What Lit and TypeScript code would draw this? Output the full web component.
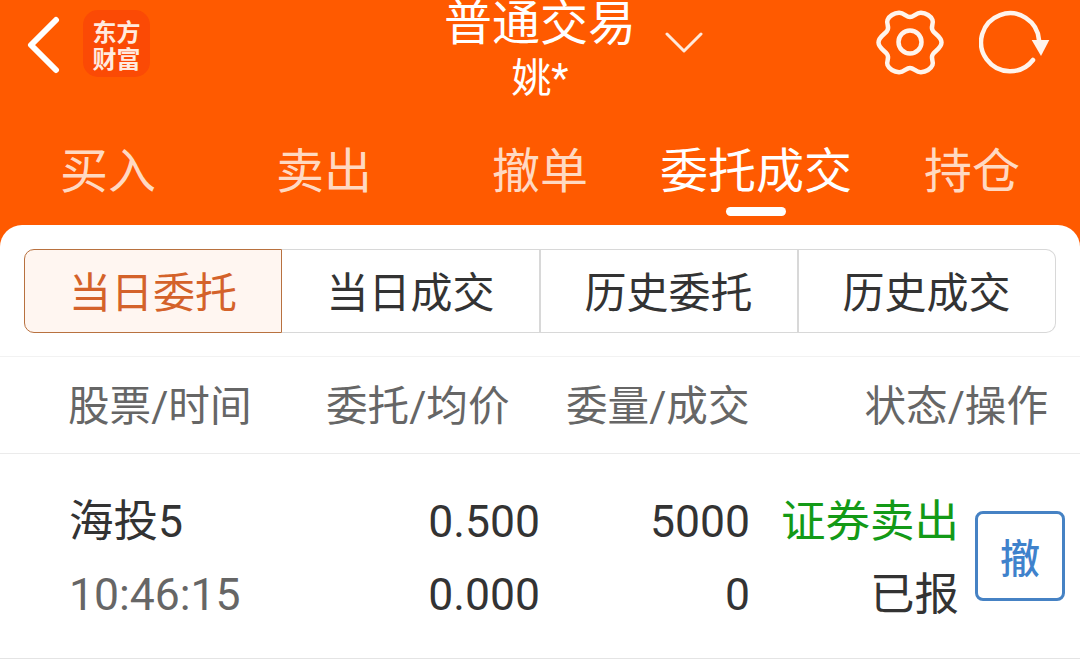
import { LitElement, html, css } from "lit";
import { customElement } from "lit/decorators.js";

@customElement("app-root")
export class AppRoot extends LitElement {
  static styles = css`
    :host { display: block; width: 1080px; height: 665px; overflow: hidden; background: #ff5a00;
      font-family: Roboto, "Noto Sans CJK SC", sans-serif; color: #333; }
    .head { height: 225px; display: flex; flex-direction: column; }
    .top { height: 118px; position: relative; display: flex; color: #fff; overflow: visible; }
    .left { display: flex; align-items: flex-start; gap: 23px; padding: 16px 0 0 26px; width: 300px; box-sizing: border-box; }
    .logo { width: 67px; height: 67px; margin-top: -6px; border-radius: 15px; background: #fb4a05; color: #ffeadf;
      font: 700 24px/27px "Noto Sans CJK SC", sans-serif; display: flex; flex-direction: column; align-items: center; justify-content: center; }
    .logo span { display: block; height: 27px; line-height: 27px; }
    .title { flex: 1; display: flex; flex-direction: column; align-items: center; }
    .t1 { font-size: 48px; line-height: 48px; height: 48px; }
    .t2 { font-size: 40px; line-height: 52px; margin-top: 5px; }
    .chev { position: absolute; left: 665px; top: 31px; }
    .right { width: 300px; display: flex; justify-content: flex-end; gap: 35px; padding: 10px 29px 0 0; box-sizing: border-box; align-items: flex-start; }
    .tabs { display: flex; height: 107px; }
    .tab { width: 216px; text-align: center; font-size: 48px; line-height: 60px; padding-top: 24px; color: #ffd9c2; position: relative; box-sizing: border-box; white-space: nowrap; }
    .tab.on { color: #fff; }
    .tab.on::after { content: ""; position: absolute; left: 78px; top: 89px; width: 60px; height: 9px; border-radius: 5px; background: #fff; }
    .panel { background: #fff; border-radius: 22px 22px 0 0; height: 440px; }
    .seg { margin: 0 24px; padding-top: 24px; display: grid; grid-template-columns: repeat(4, 258px); height: 84px; }
    .seg div { border: 1px solid #d8d8d8; border-left: 0; border-right-width: 2px; margin-right: -1px; font-size: 42px; padding-bottom: 3px; display: flex; align-items: center; justify-content: center; color: #333; box-sizing: border-box; height: 84px; }
    .seg div:last-child { border-radius: 0 10px 10px 0; border-right-width: 1px; margin-right: 0; }
    .seg .on { border: 1px solid #b8713f; margin-right: 0; border-radius: 10px 0 0 10px; background: #fff6f1; color: #d4622a; }
    .cols { margin-top: 23px; height: 98px; border-top: 1px solid #f2f2f2; border-bottom: 1px solid #ebebeb; box-sizing: border-box; display: grid;
      grid-template-columns: 68px 258px 184px 56px 184px 1fr 32px; align-items: center; font-size: 41.6px; color: #666; white-space: nowrap; }
    .cols span { margin-top: -4px; }
    .cols .c1 { grid-column: 2; } .cols .c2 { grid-column: 3; } .cols .c3 { grid-column: 5; } .cols .c4 { grid-column: 6; text-align: right; }
    .row { height: 205px; border-bottom: 1px solid #e4e4e4; box-sizing: border-box; display: flex; font-size: 44.5px; }
    .col { display: flex; flex-direction: column; padding-top: 42px; line-height: 52px; gap: 21px; white-space: nowrap; }
    .name { width: 330px; padding-left: 69px; box-sizing: border-box; }
    .time { color: #666; }
    .num { text-align: right; }
    .price { width: 210px; }
    .qty { width: 210px; }
    .stat { width: 209px; text-align: right; }
    .sell { color: #139a17; }
    .btn { width: 90px; height: 90px; margin: 57px 0 0 16px; border: 3px solid #4682c4; border-radius: 8px; box-sizing: border-box; color: #3f82cc;
      font-size: 40px; font-weight: 500; display: flex; align-items: center; justify-content: center; }
  `;
  render() {
    return html`
      <div class="head">
        <div class="top">
          <div class="left">
            <svg width="34" height="58" viewBox="0 0 34 58"><path d="M30 4 L5 29 L30 54" fill="none" stroke="#fff" stroke-width="6" stroke-linecap="round" stroke-linejoin="round"/></svg>
            <div class="logo"><span>东方</span><span>财富</span></div>
          </div>
          <div class="title"><div class="t1">普通交易</div><div class="t2">姚*</div></div>
          <svg class="chev" width="38" height="24" viewBox="0 0 38 24"><path d="M2 3 L19 20 L36 3" fill="none" stroke="#ffe9dc" stroke-width="3" stroke-linecap="round" stroke-linejoin="round"/></svg>
          <div class="right">
            <svg width="68" height="66" viewBox="0 0 68 66"><path d="M34 7 C38 7 40 2.5 45 2.8 C50 3 55 6 56.5 10 C58 14 54 17 57 21 C59 24 65.5 27 65.5 32.5 C65.5 38 59 41 57 44 C54 48 58 51 56.5 55 C55 59 50 62 45 62.2 C40 62.5 38 58 34 58 C30 58 28 62.5 23 62.2 C18 62 13 59 11.5 55 C10 51 14 48 11 44 C9 41 2.5 38 2.5 32.5 C2.5 27 9 24 11 21 C14 17 10 14 11.5 10 C13 6 18 3 23 2.8 C28 2.5 30 7 34 7 Z" fill="none" stroke="#fff4ec" stroke-width="4.5" stroke-linejoin="round"/><circle cx="34" cy="32" r="11.5" fill="none" stroke="#fff4ec" stroke-width="4.5"/></svg>
            <svg width="72" height="66" viewBox="0 0 72 66"><path d="M54 50 A29 29 0 1 1 60 30" fill="none" stroke="#fff4ec" stroke-width="4.5" stroke-linecap="round"/><path d="M52.7 30 H70.3 L62 46 Z" fill="#fff4ec"/></svg>
          </div>
        </div>
        <div class="tabs">
          <div class="tab">买入</div><div class="tab">卖出</div><div class="tab">撤单</div><div class="tab on">委托成交</div><div class="tab">持仓</div>
        </div>
      </div>
      <div class="panel">
        <div class="seg"><div class="on">当日委托</div><div>当日成交</div><div>历史委托</div><div>历史成交</div></div>
        <div class="cols"><span class="c1">股票/时间</span><span class="c2">委托/均价</span><span class="c3">委量/成交</span><span class="c4">状态/操作</span></div>
        <div class="row">
          <div class="col name"><span>海投5</span><span class="time">10:46:15</span></div>
          <div class="col num price"><span>0.500</span><span>0.000</span></div>
          <div class="col num qty"><span>5000</span><span>0</span></div>
          <div class="col stat"><span class="sell">证券卖出</span><span>已报</span></div>
          <div class="btn">撤</div>
        </div>
      </div>
    `;
  }
}
